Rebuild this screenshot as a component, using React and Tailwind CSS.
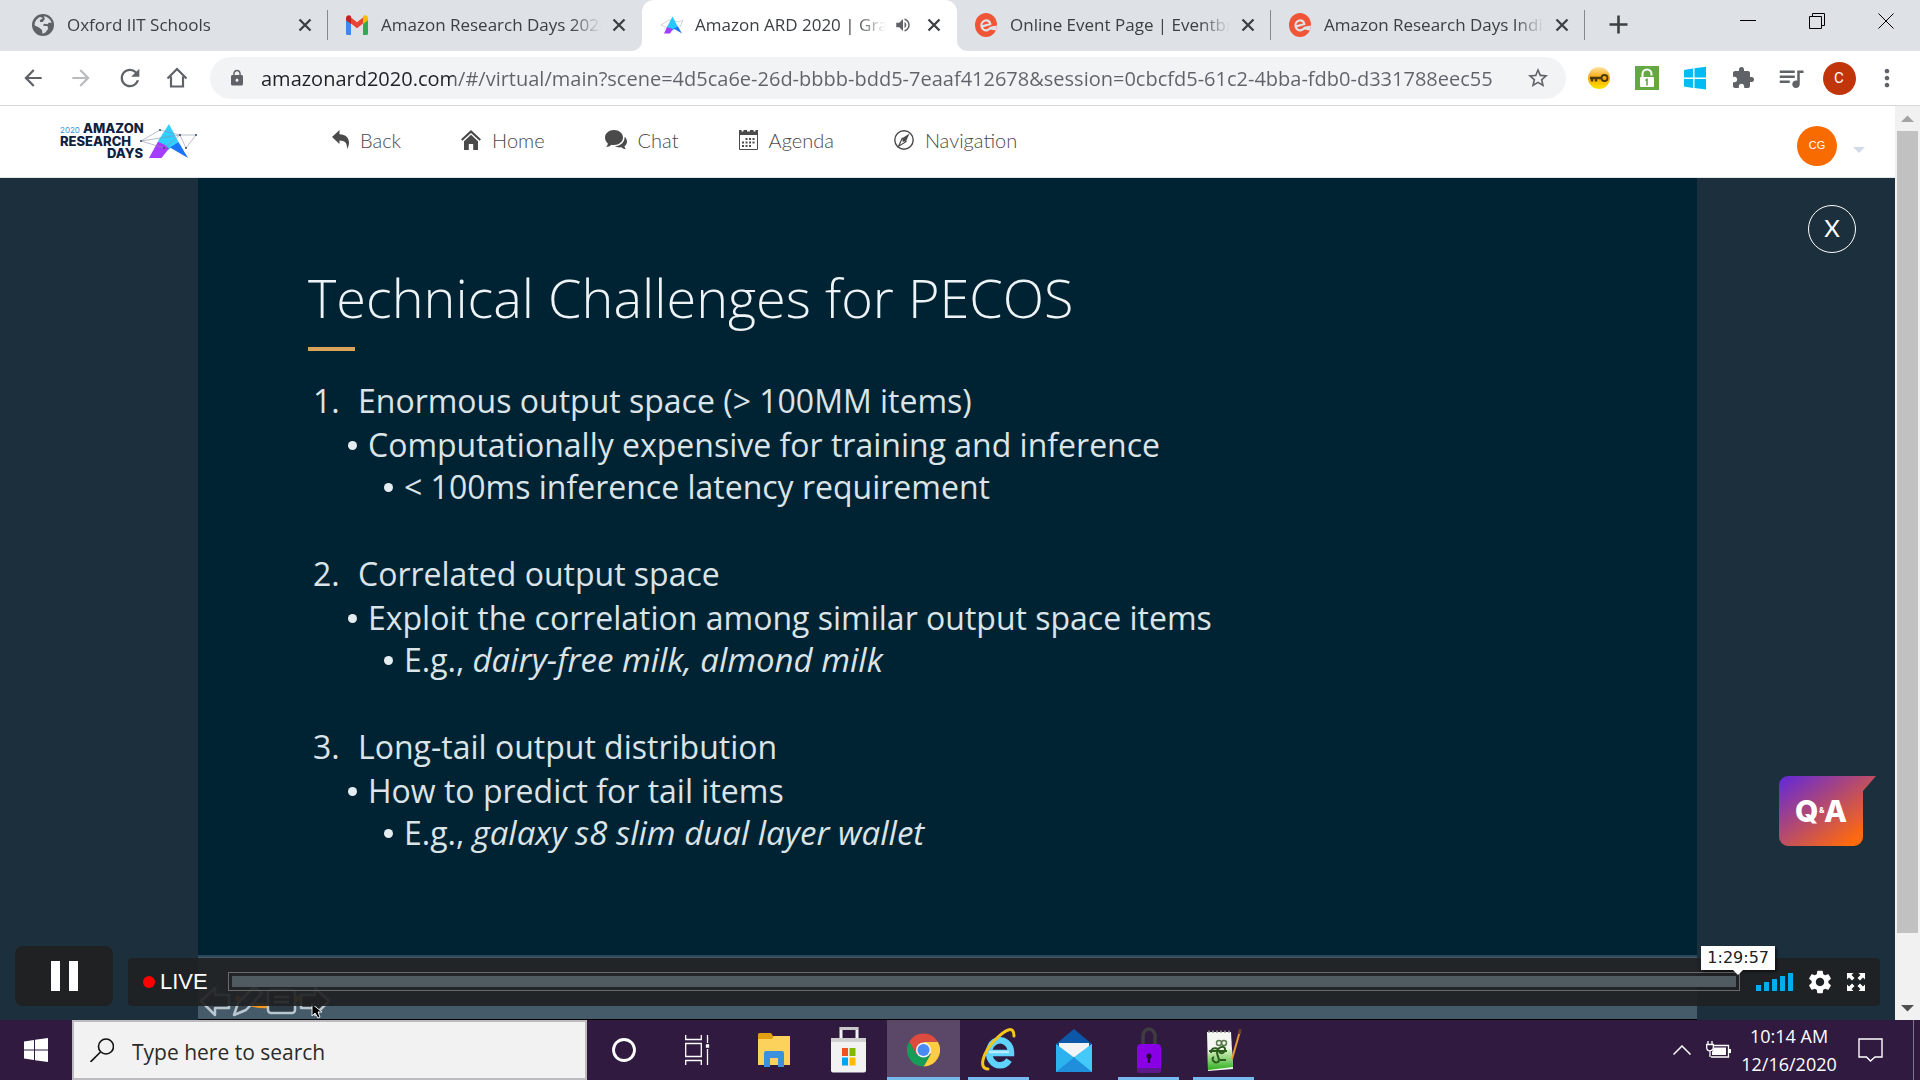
import React from "react";
import {
  MdArrowBack,
  MdArrowForward,
  MdRefresh,
  MdLock,
  MdStarBorder,
  MdExtension,
  MdQueueMusic,
  MdMoreVert,
  MdVolumeUp,
  MdSettings,
} from "react-icons/md";

function GlobeIcon() {
  return (
    <svg width="22" height="22" viewBox="0 0 22 22" aria-hidden="true">
      <circle cx="11" cy="11" r="11" fill="#5f6368" />
      <path d="M12 2.2c3.6.4 6.800 3.200 7.600 6.800l-2.600-.6-1.600 1.800-3.200-.4-1.400 1.400 2 .8 2.600 0 .8 2.800-2.800 3.800-3 1.200-.4-3.800-2.600-2.200-4.900-2.600c.2-4.400 3-7.200 5.500-8.300l3 1.100-3.200 2.200.2 1.700 2.600.1 2.200-2.800z" fill="#dee1e6" />
    </svg>
  );
}

function GmailIcon() {
  return (
    <svg width="22" height="20" viewBox="0 0 22 20" aria-hidden="true">
      <path d="M0 4v14.500a1.500 1.500 0 0 0 1.500 1.500H5V8z" fill="#4285f4" />
      <path d="M22 4v14.500a1.500 1.500 0 0 1-1.500 1.500H17V8z" fill="#34a853" />
      <path d="M5 2.500l6 4.800 6-4.800V8.500l-6 4.800-6-4.800z" fill="#ea4335" />
      <path d="M0 3.500C0 .5 3-.5 5 1.200V9L0 5.200z" fill="#c5221f" />
      <path d="M22 3.500C22 .5 19-.5 17 1.200V9l5-3.800z" fill="#fbbc04" />
    </svg>
  );
}

function ArdMark({ size }) {
  return (
    <svg width={size} height={size} viewBox="0 0 24 24" aria-hidden="true">
      <path d="M1 12L9 7l10 2 4-2-3 7M1 12l9 4" fill="none" stroke="#c4c8d0" strokeWidth="0.800" />
      <path d="M12.500 3.500L18 14l-5.500 3.500L7 14z" fill="#25c8ff" />
      <path d="M7 14l-3 6.500h6l3-4.500z" fill="#a63cff" />
      <path d="M18 13.500l4 7-8.500-5z" fill="#1f74ff" />
    </svg>
  );
}

function EventbriteIcon() {
  return (
    <svg width="22" height="24" viewBox="0 0 22 24" aria-hidden="true">
      <ellipse cx="11" cy="12" rx="11" ry="12" fill="#f05537" />
      <path d="M6.500 13.600l8.800-2.600c-.5-2.600-2.600-4.200-5-3.500-2.800.8-4.400 3.400-3.800 6.100.6 2.600 3.200 4.300 5.800 3.500 1.500-.4 2.700-1.400 3.400-2.600" fill="none" stroke="#dee1e6" strokeWidth="2.200" />
      <path d="M15 13.800l7-1.300-1 5-6-1z" fill="#dee1e6" />
    </svg>
  );
}

const TABS = [
  { title: "Oxford IIT Schools", icon: <GlobeIcon />, divider: true },
  { title: "Amazon Research Days 2020", icon: <GmailIcon /> },
  { title: "Amazon ARD 2020 | Grand", icon: <ArdMark size={24} />, active: true, audio: true },
  { title: "Online Event Page | Eventbrite", icon: <EventbriteIcon />, divider: true },
  { title: "Amazon Research Days India", icon: <EventbriteIcon />, divider: true },
];

function Tab({ tab }) {
  return (
    <div
      className={
        tab.active
          ? "relative z-10 flex h-full w-[315px] min-w-0 items-center rounded-t-xl bg-white pr-[13px] pb-[2px] pl-[18px]"
          : "relative flex h-full w-[314px] min-w-0 items-center pr-[13px] pb-[2px] pl-[18px]"
      }
    >
      {tab.active && (
        <>
          <svg className="absolute bottom-0 -left-[10px]" width="10" height="10" aria-hidden="true">
            <path d="M0 10A10 10 0 0 0 10 0V10z" fill="#fff" />
          </svg>
          <svg className="absolute -right-[10px] bottom-0" width="10" height="10" aria-hidden="true">
            <path d="M10 10A10 10 0 0 1 0 0V10z" fill="#fff" />
          </svg>
        </>
      )}
      <span className="flex w-[35px] shrink-0 items-center">{tab.icon}</span>
      <button
        type="button"
        className="min-w-0 flex-1 overflow-hidden text-left text-[17px] leading-6 whitespace-nowrap text-[#3c4043] [mask-image:linear-gradient(to_right,black_calc(100%-30px),transparent)]"
      >
        {tab.title}
      </button>
      {tab.audio && <MdVolumeUp className="ml-2 shrink-0 text-[#5f6368]" size={18} />}
      <button type="button" aria-label={"Close " + tab.title} className={tab.audio ? "ml-3 shrink-0 text-[#3c4043]" : "ml-2 shrink-0 text-[#3c4043]"}>
        <svg width="20" height="20" stroke="currentColor" strokeWidth="2.300">
          <path d="M4.500 4.500l11 11M15.500 4.500l-11 11" />
        </svg>
      </button>
      {tab.divider && <span className="absolute right-0 h-[30px] w-px bg-[#85888c]" />}
    </div>
  );
}

function TabStrip() {
  return (
    <header className="flex h-[51px] items-start bg-[#dee1e6]">
      <div className="flex h-full min-w-0 items-center pl-[14px]">
        {TABS.map((tab) => (
          <Tab key={tab.title} tab={tab} />
        ))}
        <button type="button" aria-label="New tab" className="ml-5 pb-[2px] text-[#3c4043]">
          <svg width="27" height="27" stroke="currentColor" strokeWidth="2.600">
            <path d="M13.500 4.500v18M4.500 13.500h18" />
          </svg>
        </button>
      </div>
      <div className="ml-auto flex h-[42px] items-center gap-[53px] pr-[26px] text-black">
        <button type="button" aria-label="Minimize">
          <svg width="16" height="16"><path d="M0 7.500h16" stroke="currentColor" /></svg>
        </button>
        <button type="button" aria-label="Restore">
          <svg width="16" height="16" fill="none" stroke="currentColor"><path d="M.5 3.500h12v12H.5zM3.500 3V.5h12v12H13" /></svg>
        </button>
        <button type="button" aria-label="Close window">
          <svg width="16" height="16" stroke="currentColor"><path d="M.5.5l15 15M15.500.5l-15 15" /></svg>
        </button>
      </div>
    </header>
  );
}

function ExtensionButton({ label, children }) {
  return (
    <button type="button" aria-label={label} className="flex w-12 items-center justify-center">
      {children}
    </button>
  );
}

function Toolbar() {
  return (
    <div className="flex h-[55px] items-center border-b border-[#d5d7da] bg-white pr-[9px] pl-5 text-[#5f6368]">
      <div className="flex w-[190px] shrink-0 items-center gap-[22px]">
        <button type="button" aria-label="Back"><MdArrowBack size={26} /></button>
        <button type="button" aria-label="Forward" className="text-[#b9bbbe]"><MdArrowForward size={26} /></button>
        <button type="button" aria-label="Reload"><MdRefresh size={28} /></button>
        <button type="button" aria-label="Home">
          <svg width="22" height="22" viewBox="0 0 22 22" fill="none" stroke="currentColor" strokeWidth="2.200">
            <path d="M1.500 11.500L11 2l9.500 9.500M5 9.500v10h12v-10" />
          </svg>
        </button>
      </div>
      <form className="flex h-[42px] min-w-0 flex-1 items-center rounded-full bg-[#f1f3f4] pr-4 pl-[18px]" onSubmit={(e) => e.preventDefault()}>
        <MdLock size={18} className="mr-[15px] shrink-0" />
        <input
          aria-label="Address"
          defaultValue="amazonard2020.com/#/virtual/main?scene=4d5ca6e-26d-bbbb-bdd5-7eaaf412678&session=0cbcfd5-61c2-4bba-fdb0-d331788eec55"
          className="min-w-0 flex-1 bg-[linear-gradient(to_right,#202124_193px,#5f6368_193px)] bg-clip-text pt-px text-[20px] leading-7 text-transparent outline-none"
        />
        <button type="button" aria-label="Bookmark"><MdStarBorder size={24} /></button>
      </form>
      <div className="ml-[9px] flex shrink-0 items-center">
        <ExtensionButton label="Key extension">
          <svg width="24" height="24" viewBox="0 0 24 24">
            <defs>
              <linearGradient id="keyGlow" x1="0" y1="0" x2="0" y2="1">
                <stop offset="0" stopColor="#ffe3a0" />
                <stop offset="0.500" stopColor="#f9a602" />
                <stop offset="1" stopColor="#ffe600" />
              </linearGradient>
            </defs>
            <circle cx="12" cy="12" r="11" fill="url(#keyGlow)" />
            <circle cx="17.500" cy="12" r="3" fill="none" stroke="#4a3a10" strokeWidth="1.800" />
            <path d="M3 12h11.500M5 12.500v3M9 12.500v3" stroke="#4a3a10" strokeWidth="2.400" />
          </svg>
        </ExtensionButton>
        <ExtensionButton label="Lock extension">
          <svg width="24" height="24" viewBox="0 0 24 24">
            <path fill="#63a843" d="M0 0h24v24H0z" />
            <path d="M7.500 12V8a4.500 4.500 0 0 1 9 0v1.500" fill="none" stroke="#fff" strokeWidth="2" />
            <rect x="5" y="11" width="14" height="10" rx="1" fill="#fff" />
            <path d="M10.500 14.500l1.500-1v6" fill="none" stroke="#63a843" strokeWidth="1.600" />
          </svg>
        </ExtensionButton>
        <ExtensionButton label="Windows extension">
          <svg width="22" height="24" viewBox="0 0 22 24" fill="#00bcf2">
            <path d="M0 4l9-1.500v9H0zM10.500 2.200L22 .8v10.700H10.500zM0 13h9v9L0 20.500zM10.500 13H22v10.500l-11.500-1.400z" />
          </svg>
        </ExtensionButton>
        <ExtensionButton label="Extensions"><MdExtension size={24} /></ExtensionButton>
        <ExtensionButton label="Media controls"><MdQueueMusic size={30} /></ExtensionButton>
        <ExtensionButton label="Profile">
          <span className="flex h-[33px] w-[33px] items-center justify-center rounded-full bg-[#c1350b] font-['Roboto',sans-serif] text-[15px] text-white">C</span>
        </ExtensionButton>
        <ExtensionButton label="Menu"><MdMoreVert size={28} /></ExtensionButton>
      </div>
    </div>
  );
}

function Logo() {
  return (
    <svg width="138" height="38" viewBox="0 0 138 38" role="img" aria-label="2020 Amazon Research Days">
      <g fill="#0d2240" fontFamily="Inter, sans-serif" fontWeight="800" fontSize="13">
        <text x="0" y="11" fontSize="8" fontWeight="400" fill="#3f97dd">2020</text>
        <text x="23" y="11">AMAZON</text>
        <text x="0" y="24">RESEARCH</text>
        <text x="47" y="36">DAYS</text>
      </g>
      <path d="M109 2l9.500 18L108 28l-10-9z" fill="#31cfff" />
      <path d="M98 19.500L89 36h12.500l7.500-9.500-4-3.500z" fill="#a43dff" />
      <path d="M118.500 20l9.500 16-18-10.500z" fill="#1b72fb" />
      <g fill="none" stroke="#8790a3" strokeWidth="0.600">
        <path d="M81 19l19-11 20 5h16l-10 13-6-13-16 13-23-7 39-6" />
      </g>
      <g fill="#3a4766">
        <circle cx="81" cy="19" r="1" /><circle cx="100" cy="8" r="1" /><circle cx="120" cy="13" r="1" />
        <circle cx="136" cy="13" r="1" /><circle cx="126" cy="26" r="1" /><circle cx="104" cy="26" r="1" />
      </g>
    </svg>
  );
}

function ReplyIcon() {
  return (
    <svg width="17" height="20" viewBox="0 0 17 20" fill="currentColor" aria-hidden="true">
      <path d="M7.500 0v4.200C14 4.400 17 8 17 12.500c0 3-1 5-2 6.500.4-6-2-8.500-7.500-8.600V14L0 7z" />
    </svg>
  );
}

function HouseIcon() {
  return (
    <svg width="20" height="20" viewBox="0 0 20 20" fill="currentColor" aria-hidden="true">
      <path d="M10 0l10 9.300-1.400 1.500L10 2.900 1.400 10.800 0 9.300z" />
      <path d="M10 4.800l7 6.400V20h-4.800v-6H7.800v6H3v-8.800z" />
    </svg>
  );
}

function ChatIcon() {
  return (
    <svg width="22" height="20" viewBox="0 0 22 20" fill="currentColor" aria-hidden="true">
      <path d="M9 0c5 0 9 3.300 9 7.500S14 15 9 15c-.9 0-1.800-.1-2.600-.3C5 16 3 17 1 17c1-.9 1.700-2.200 1.900-3.600C1.100 12 0 9.900 0 7.500 0 3.300 4 0 9 0z" />
      <path d="M19.600 6.800C21.100 8 22 9.700 22 11.500c0 1.900-1 3.600-2.500 4.700.2 1.200.7 2.300 1.600 3-1.800 0-3.500-.7-4.700-1.900-2.400.4-4.700 0-6.400-1 5.500-.2 9.900-4 9.600-9.500z" />
    </svg>
  );
}

function CalendarIcon() {
  return (
    <svg width="19" height="20" viewBox="0 0 19 20" aria-hidden="true">
      <path d="M.5 2.500h18v17H.5z" fill="none" stroke="currentColor" />
      <path d="M0 0h2.500v1.500h2V0H8v1.500h3V0h3.500v1.500h2V0H19v5H0z" fill="currentColor" />
      <g stroke="currentColor" strokeWidth="2" strokeDasharray="2 1.500">
        <path d="M6.500 9H17M3 12.500h14M3 16h10" />
      </g>
    </svg>
  );
}

function CompassIcon() {
  return (
    <svg width="20" height="20" viewBox="0 0 20 20" aria-hidden="true">
      <circle cx="10" cy="10" r="9.200" fill="none" stroke="currentColor" strokeWidth="1.400" />
      <path d="M15.500 3.500l-3.600 8.200-3.700-3.400z" fill="currentColor" />
      <path d="M8.200 8.300L4.600 16.200l7.300-4.500z" fill="none" stroke="currentColor" strokeWidth="1.200" />
      <circle cx="9.600" cy="10.500" r="1.200" fill="currentColor" />
    </svg>
  );
}

const NAV = [
  { label: "Back", icon: <ReplyIcon /> },
  { label: "Home", icon: <HouseIcon /> },
  { label: "Chat", icon: <ChatIcon /> },
  { label: "Agenda", icon: <CalendarIcon /> },
  { label: "Navigation", icon: <CompassIcon /> },
];

function SiteHeader() {
  return (
    <div className="flex h-[72px] items-center border-b border-[#e4e6e8] bg-white pr-[30px] pl-[60px]">
      <a href="#home" className="w-[272px] shrink-0 pb-[2px]"><Logo /></a>
      <nav className="flex items-center gap-[60px] pb-1">
        {NAV.map((n) => (
          <a key={n.label} href={"#" + n.label.toLowerCase()} className="flex items-center gap-[11px] font-['Lato',sans-serif] text-[20px] leading-6 font-light text-[#4a4a4a]">
            {n.icon}
            {n.label}
          </a>
        ))}
      </nav>
      <button type="button" aria-label="Account" className="ml-auto flex items-center gap-4 pt-2">
        <span className="flex h-10 w-10 items-center justify-center rounded-full bg-[#f76b00] font-['Liberation_Sans',sans-serif] text-[11px] text-white">CG</span>
        <svg width="12" height="6" className="mt-2" aria-hidden="true"><path d="M0 0h12L6 6z" fill="#d3d9e8" /></svg>
      </button>
    </div>
  );
}

const POINTS = [
  { head: "Enormous output space (> 100MM items)", sub: "Computationally expensive for training and inference", lead: "< 100ms inference latency requirement" },
  { head: "Correlated output space", sub: "Exploit the correlation among similar output space items", lead: "E.g., ", example: "dairy-free milk, almond milk" },
  { head: "Long-tail output distribution", sub: "How to predict for tail items", lead: "E.g., ", example: "galaxy s8 slim dual layer wallet" },
];

function Bullet() {
  return <span className="mr-[11px] h-[9px] w-[9px] shrink-0 rounded-full bg-[#e6edf0]" />;
}

function Slide() {
  return (
    <article className="mx-[198px] flex flex-1 flex-col justify-between bg-[#002333]">
      <div className="px-[110px] pt-[81px]">
        <h1 className="text-[54px] leading-[76px] font-light text-[#eef3f5]">Technical Challenges for PECOS</h1>
        <div className="mt-3 h-[4px] w-[47px] bg-[#d9a35c]" />
        <ol className="mt-[28px] flex flex-col gap-[45px] text-[32px] text-[#dbe4e8]">
          {POINTS.map((p, i) => (
            <li key={p.head}>
              <p className="flex pl-[5px] leading-[44px]"><span className="w-[45px]">{i + 1}.</span>{p.head}</p>
              <ul>
                <li className="flex items-center pl-[40px] leading-[44px]"><Bullet />{p.sub}</li>
                <li className="flex items-center pl-[76px] leading-[40px]">
                  <Bullet />
                  <span>{p.lead}{p.example && <em className="text-[33px]">{p.example}</em>}</span>
                </li>
              </ul>
            </li>
          ))}
        </ol>
      </div>
      <div className="h-[65px] border-t-2 border-b border-t-[#2c4858] border-b-black bg-[#455b69]">
        <svg width="136" height="62" viewBox="0 0 136 62" aria-hidden="true">
          <path d="M38 40c14 11 42 12 64 1" fill="none" stroke="#f29a1f" strokeWidth="5" />
          <g fill="#3a4a55" stroke="#b9c7d0" strokeWidth="2.500" strokeLinejoin="round">
            <path d="M3 44l14-13v7h14v13H17v7z" />
            <path d="M36 58l4-12 16-16 8 6-16 17z" />
            <rect x="70" y="33" width="27" height="23" rx="3" fill="#2b3a44" />
            <path d="M76 40h15M76 45h15" />
            <path d="M131 44l-14-13v7h-14v13h14v7z" fill="#22292d" />
          </g>
          <path d="M114 47v12l3-3 3 5 2-1-2-5h4z" fill="#000" stroke="#e8edf0" strokeWidth="1" />
        </svg>
      </div>
    </article>
  );
}

const VOLUME = ["h-[6px]", "h-[9px]", "h-[12px]", "h-[15px]", "h-[18px]"];

function PlayerControls() {
  return (
    <div className="absolute inset-x-[15px] bottom-[14px] flex items-end gap-[15px]">
      <button type="button" aria-label="Pause" className="flex h-[60px] w-[98px] items-center justify-center gap-[9px] rounded-lg bg-[#202122]">
        <span className="h-[30px] w-[9px] bg-white" />
        <span className="h-[30px] w-[9px] bg-white" />
      </button>
      <div className="flex h-[48px] flex-1 items-center rounded bg-[#202122ea] pr-[15px] pb-px pl-[15px]">
        <span className="h-3 w-3 rounded-full bg-[#ff0000]" />
        <span className="ml-[5px] w-[68px] font-['Liberation_Sans',sans-serif] text-[22px] leading-6 text-white">LIVE</span>
        <div className="relative flex-1 border border-[#6a6a6a] p-[3px]">
          <div className="h-[11px] bg-[#4f5b61]" />
          <div className="absolute -right-[36px] bottom-[20px] bg-white px-[6px] font-['DejaVu_Sans',sans-serif] text-[16px] leading-6 text-[#222] shadow-[2px_2px_2px_rgba(0,0,0,0.5)]">
            1:29:57
            <svg className="absolute top-full left-[32px]" width="10" height="5" aria-hidden="true"><path d="M0 0h10L5 5z" fill="#fff" /></svg>
          </div>
        </div>
        <button type="button" aria-label="Volume" className="ml-4 flex items-end gap-[3px]">
          {VOLUME.map((h) => (
            <span key={h} className={"w-[5px] bg-[#00aeef] " + h} />
          ))}
        </button>
        <button type="button" aria-label="Settings" className="ml-[13px] text-white"><MdSettings size={28} /></button>
        <button type="button" aria-label="Full screen" className="ml-[13px] text-white">
          <svg width="18" height="18" viewBox="0 0 18 18" fill="currentColor">
            <path d="M0 0h6.500L4.500 2l3 3L5 7.500l-3-3-2 2zM18 0v6.500l-2-2-3 3L10.500 5l3-3-2-2zM0 18v-6.500l2 2 3-3L7.500 13l-3 3 2 2zM18 18h-6.500l2-2-3-3 2.500-2.500 3 3 2-2z" />
          </svg>
        </button>
      </div>
    </div>
  );
}

function Stage() {
  return (
    <section className="relative flex flex-1 flex-col bg-[#1c2f3c]">
      <Slide />
      <button type="button" aria-label="Close session" className="absolute top-[27px] right-[39px] flex h-12 w-12 items-center justify-center rounded-full border border-white pb-[2px] font-['Lato',sans-serif] text-[24px] leading-6 text-white">
        X
      </button>
      <button type="button" aria-label="Questions and answers" className="absolute right-[19px] bottom-[174px]">
        <svg width="97" height="70" viewBox="0 0 97 70">
          <defs>
            <linearGradient id="qaFill" x1="0" y1="0" x2="1" y2="1">
              <stop offset="0.050" stopColor="#6a2bd0" />
              <stop offset="0.850" stopColor="#ff6a0c" />
            </linearGradient>
          </defs>
          <path d="M9 0h88L84 15v46a9 9 0 0 1-9 9H9a9 9 0 0 1-9-9V9a9 9 0 0 1 9-9z" fill="url(#qaFill)" />
          <g fill="#fff" fontFamily="Inter, sans-serif" fontWeight="800">
            <text x="16" y="46" fontSize="30">Q</text>
            <text x="40" y="37" fontSize="8">&amp;</text>
            <text x="45" y="46" fontSize="30">A</text>
          </g>
        </svg>
      </button>
      <PlayerControls />
    </section>
  );
}

function ScrollBar() {
  return (
    <div className="flex w-[25px] shrink-0 flex-col items-center bg-[#f1f1f1]">
      <svg width="25" height="25" aria-hidden="true"><path d="M6 16h13l-6.500-6.500z" fill="#a3a3a3" /></svg>
      <div className="w-[21px] grow-[802] bg-[#c1c1c1]" />
      <div className="grow-[62]" />
      <svg width="25" height="25" aria-hidden="true"><path d="M6 10h13l-6.500 6.500z" fill="#505050" /></svg>
    </div>
  );
}

function TaskViewIcon() {
  return (
    <svg width="28" height="30" viewBox="0 0 28 30" fill="none" stroke="#fff" strokeWidth="1.300">
      <path d="M.7 0v4.500h15.600V0M.7 8.500h15.600v13H.7zM.7 30v-4.500h15.600V30M22.500 0v8M22.500 14v16" />
      <path d="M21.500 10h2v2h-2z" fill="#fff" />
    </svg>
  );
}

function FolderIcon() {
  return (
    <svg width="32" height="34" viewBox="0 0 32 34">
      <path d="M0 1.500A1.500 1.500 0 0 1 1.500 0H13l2 3h15a2 2 0 0 1 2 2v27H0z" fill="#e0a011" />
      <path d="M0 6h14l2-3h16v29H0z" fill="#fdd25c" />
      <path d="M6 34V20a2 2 0 0 1 2-2h16a2 2 0 0 1 2 2v14h-6v-9h-8v9z" fill="#3b91dd" />
    </svg>
  );
}

function StoreIcon() {
  return (
    <svg width="35" height="46" viewBox="0 0 35 46">
      <path d="M10 15V1.500h16V15" fill="none" stroke="#f3f3f3" strokeWidth="3" />
      <path d="M9 1.500h18" stroke="#c9c9c9" strokeWidth="3" />
      <path d="M0 11h35v32.500a2 2 0 0 1-2 2H2a2 2 0 0 1-2-2z" fill="#f2f2f2" />
      <path d="M0 11h35v4H0z" fill="#d0d0d0" />
      <path d="M11 21h6v8h-6z" fill="#f25022" /><path d="M18.500 21h6v8h-6z" fill="#7fba00" />
      <path d="M11 30.500h6v8h-6z" fill="#00a4ef" /><path d="M18.500 30.500h6v8h-6z" fill="#ffb900" />
    </svg>
  );
}

function ChromeIcon() {
  return (
    <svg width="33" height="44" viewBox="0 0 48 48">
      <path d="M24 12h20.800A24 24 0 0 1 24 48L34.400 30z" fill="#fecd40" />
      <path d="M3.200 12L13.600 30 24 24V12h20.800A24 24 0 0 0 3.200 12z" fill="#dd4b3e" />
      <path d="M3.200 12L13.600 30l10.400 4 10.400-4L24 48A24 24 0 0 1 3.200 12z" fill="#159d58" />
      <circle cx="24" cy="24" r="11" fill="#f5f5f5" />
      <circle cx="24" cy="24" r="8.800" fill="#4a8af4" />
    </svg>
  );
}

function ExplorerIcon() {
  return (
    <svg width="36" height="44" viewBox="0 0 36 44">
      <path d="M8 25h22A11 12.500 0 1 0 28 32" fill="none" stroke="#5fd3fa" strokeWidth="6.500" />
      <path d="M8 24h20" stroke="#b5ecff" strokeWidth="2.500" />
      <path d="M7 41C-3 41 2 24 14 12S33-2 33 8" fill="none" stroke="#f5c518" strokeWidth="3" strokeLinecap="round" />
    </svg>
  );
}

function MailIcon() {
  return (
    <svg width="36" height="43" viewBox="0 0 36 43">
      <path d="M0 15L18 0l18 15v5H0z" fill="#0d57a8" />
      <path d="M3 14h30v14H3z" fill="#f1f3f5" />
      <path d="M0 15l18 13.500L36 15v28H0z" fill="#2cb2ee" />
      <path d="M36 15v28L18 28.500z" fill="#45c9f8" />
      <path d="M0 43l18-14.500L36 43z" fill="#1f8fdc" />
    </svg>
  );
}

function PadlockIcon() {
  return (
    <svg width="24" height="46" viewBox="0 0 24 46">
      <path d="M6 20V9a6 7 0 0 1 12 0v11" fill="none" stroke="#3d3d42" strokeWidth="3.500" />
      <rect x="0" y="17" width="24" height="29" rx="4" fill="#8a00e6" />
      <rect x="0" y="41" width="24" height="5" rx="2" fill="#5e1a8a" />
      <circle cx="12" cy="29" r="2.600" fill="#250838" />
      <path d="M12 28v8" stroke="#250838" strokeWidth="2.400" />
    </svg>
  );
}

function NotepadIcon() {
  return (
    <svg width="36" height="43" viewBox="0 0 36 43">
      <defs>
        <linearGradient id="padGreen" x1="0" y1="0" x2="0" y2="1">
          <stop offset="0" stopColor="#dff3c9" />
          <stop offset="1" stopColor="#2fb01e" />
        </linearGradient>
      </defs>
      <path d="M1 3l24 0 2 37-25 2z" fill="#f4f7f2" />
      <path d="M2 24l24-4 1 18-25 3z" fill="url(#padGreen)" />
      <path d="M2 2.500h23" stroke="#777" strokeWidth="2" strokeDasharray="2 2" />
      <path d="M5 24c0-6 7-6 8-2s6 2 6-2-8-2-8 3 4 8 1 10-8-3-4-5M3 22h18M14 31h6" fill="none" stroke="#2c5c1c" strokeWidth="2" />
      <circle cx="13" cy="14" r="2.500" fill="none" stroke="#5b7a4f" strokeWidth="1.500" />
      <circle cx="18" cy="14" r="2.500" fill="none" stroke="#5b7a4f" strokeWidth="1.500" />
      <path d="M34 2L26 30" stroke="#e79a34" strokeWidth="2" />
      <path d="M34.500 0L33 5" stroke="#6d3d2b" strokeWidth="2.500" />
    </svg>
  );
}

const APPS = [
  { name: "Cortana", icon: <svg width="24" height="30" viewBox="0 0 24 30"><circle cx="12" cy="15" r="10.500" fill="none" stroke="#fff" strokeWidth="2.800" /></svg> },
  { name: "Task View", icon: <TaskViewIcon /> },
  { name: "File Explorer", icon: <FolderIcon /> },
  { name: "Store", icon: <StoreIcon /> },
  { name: "Chrome", icon: <ChromeIcon />, active: true },
  { name: "Internet Explorer", icon: <ExplorerIcon />, open: true },
  { name: "Mail", icon: <MailIcon /> },
  { name: "Password manager", icon: <PadlockIcon />, open: true },
  { name: "Notepad++", icon: <NotepadIcon />, open: true },
];

function Taskbar() {
  return (
    <footer className="flex h-[60px] items-stretch bg-[#301a40] text-white">
      <button type="button" aria-label="Start" className="flex w-[72px] shrink-0 items-center justify-center">
        <svg width="24" height="24" viewBox="0 0 24 24" fill="#fff">
          <path d="M0 3.500l10-1.500v9.500H0zM11 1.800L24 0v11.500H11zM0 12.500h10V22L0 20.500zM11 12.500h13V24l-13-1.800z" />
        </svg>
      </button>
      <label className="flex w-[515px] items-center gap-[18px] border-2 border-[#bdbbbf] bg-[#f2f2f2] pl-4">
        <svg width="24" height="24" viewBox="0 0 24 24" fill="none" stroke="#111" strokeWidth="1.600" aria-hidden="true">
          <circle cx="16" cy="8.500" r="7.500" /><path d="M10.500 14L.5 24" />
        </svg>
        <input aria-label="Search" placeholder="Type here to search" className="min-w-0 flex-1 bg-transparent pt-[3px] text-[21px] leading-7 text-black outline-none placeholder:text-[#2b2b2b]" />
      </label>
      <div className="flex gap-[2px]">
        {APPS.map((app) => (
          <button
            key={app.name}
            type="button"
            aria-label={app.name}
            className={app.active ? "relative flex w-[73px] items-center justify-center bg-[#5b4868]" : "relative flex w-[73px] items-center justify-center"}
          >
            {app.icon}
            {app.active && <span className="absolute inset-x-0 bottom-0 h-[3px] bg-[#76b9ed]" />}
            {app.open && <span className="absolute inset-x-[6px] bottom-0 h-[3px] bg-[#76b9ed]" />}
          </button>
        ))}
      </div>
      <div className="ml-auto flex items-center">
        <button type="button" aria-label="Show hidden icons">
          <svg width="18" height="10" fill="none" stroke="#fff" strokeWidth="1.500"><path d="M.5 9.500L9 1l8.500 8.500" /></svg>
        </button>
        <svg className="ml-[15px]" width="25" height="18" viewBox="0 0 25 18" aria-label="Battery charging" role="img">
          <path d="M7 4.500h15.500v11.500H5" fill="none" stroke="#fff" strokeWidth="1.300" />
          <path d="M8 6.500h12v7.500H6V11z" fill="#fff" />
          <path d="M23 8h2v4h-2z" fill="#fff" />
          <path d="M2 0v3M6 0v3M.7 3.500h6.600v3a3.300 3.300 0 0 1-6.600 0zM4 10v6" fill="none" stroke="#fff" strokeWidth="1.300" />
        </svg>
        <time className="ml-[9px] w-[98px] text-center text-[18px] leading-7">
          10:14 AM
          <br />
          12/16/2020
        </time>
        <button type="button" aria-label="Notifications" className="ml-5">
          <svg width="25" height="24" viewBox="0 0 25 24" fill="none" stroke="#fff" strokeWidth="1.400"><path d="M1 1h23v18h-7l-4.500 4L8.500 19H1z" /></svg>
        </button>
        <span className="mr-[6px] ml-[30px] h-[60px] w-px bg-[#82748c]" />
      </div>
    </footer>
  );
}

export default function App() {
  return (
    <div className="flex min-h-screen flex-col bg-white font-['Open_Sans','Noto_Sans',sans-serif]">
      <TabStrip />
      <Toolbar />
      <main className="flex flex-1">
        <div className="flex min-w-0 flex-1 flex-col">
          <SiteHeader />
          <Stage />
        </div>
        <ScrollBar />
      </main>
      <Taskbar />
    </div>
  );
}
